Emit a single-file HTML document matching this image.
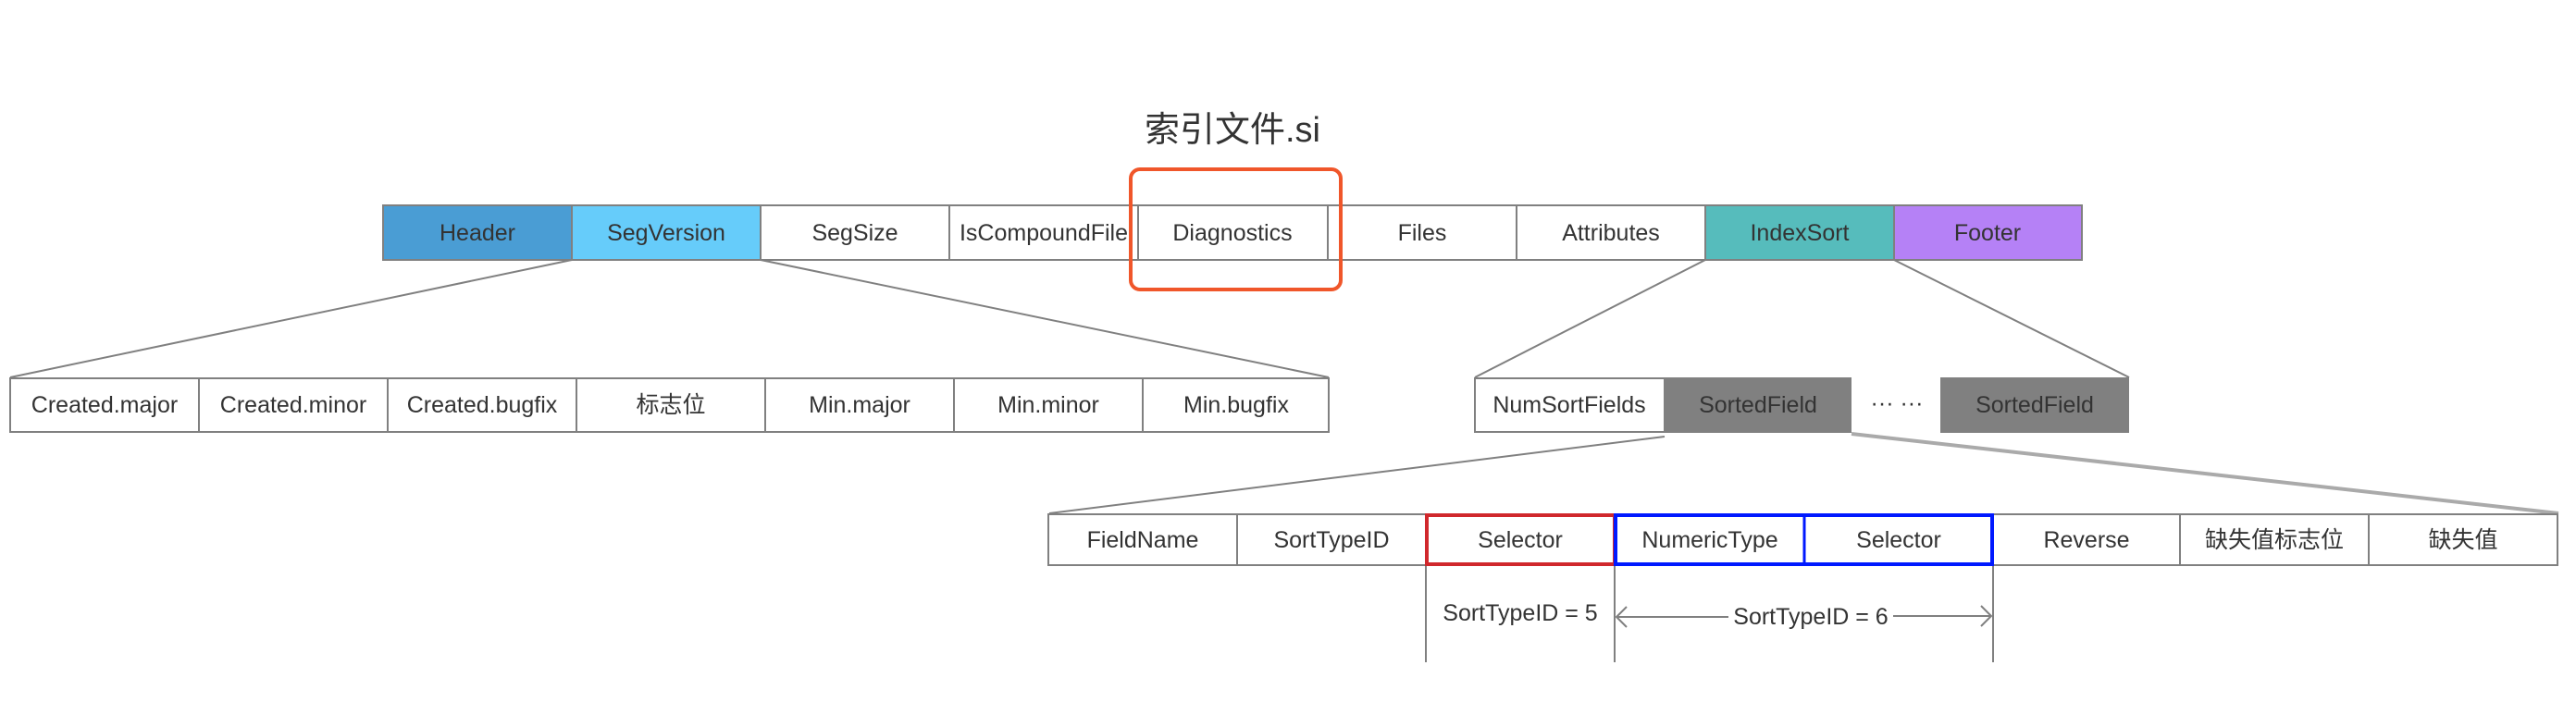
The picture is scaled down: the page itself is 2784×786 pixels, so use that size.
<!DOCTYPE html>
<html><head><meta charset="utf-8"><style>
html,body{margin:0;padding:0;background:#fff;}
svg{display:block}
text{font-family:"Liberation Sans","Noto Sans CJK SC",sans-serif;font-size:25px;fill:#333;text-anchor:middle;dominant-baseline:central}
</style></head><body>
<svg width="2784" height="786" viewBox="0 0 2784 786" xmlns="http://www.w3.org/2000/svg">
<text x="1332" y="141" style="font-size:38px">索引文件.si</text>
<!-- top row -->
<g stroke="#808080" stroke-width="2">
<rect x="414" y="222" width="204" height="59" fill="#4a9dd4"/>
<rect x="618" y="222" width="204" height="59" fill="#66ccfa"/>
<rect x="822" y="222" width="204" height="59" fill="#fff"/>
<rect x="1026" y="222" width="204" height="59" fill="#fff"/>
<rect x="1230" y="222" width="205" height="59" fill="#fff"/>
<rect x="1435" y="222" width="204" height="59" fill="#fff"/>
<rect x="1639" y="222" width="204" height="59" fill="#fff"/>
<rect x="1843" y="222" width="204" height="59" fill="#56bcbc"/>
<rect x="2047" y="222" width="203" height="59" fill="#b581f6"/>
</g>
<text x="516" y="252">Header</text>
<text x="720" y="252">SegVersion</text>
<text x="924" y="252">SegSize</text>
<text x="1128" y="252">IsCompoundFile</text>
<text x="1332" y="252">Diagnostics</text>
<text x="1537" y="252">Files</text>
<text x="1741" y="252">Attributes</text>
<text x="1945" y="252">IndexSort</text>
<text x="2148" y="252">Footer</text>
<rect x="1222" y="183" width="227" height="130" rx="10" fill="none" stroke="#f0562a" stroke-width="4"/>
<!-- connectors -->
<g stroke="#808080" stroke-width="2" fill="none">
<line x1="618" y1="281" x2="11" y2="408"/>
<line x1="822" y1="281" x2="1436" y2="408"/>
<line x1="1843" y1="281" x2="1594" y2="408"/>
<line x1="2047" y1="281" x2="2301" y2="408"/>
<line x1="1799" y1="472" x2="1134" y2="555"/>
</g>
<line x1="2001" y1="469" x2="2765" y2="555" stroke="#aaa" stroke-width="4"/>
<!-- second row left -->
<g stroke="#808080" stroke-width="2" fill="#fff">
<rect x="11" y="409" width="204" height="58"/>
<rect x="215" y="409" width="204" height="58"/>
<rect x="419" y="409" width="204" height="58"/>
<rect x="623" y="409" width="204" height="58"/>
<rect x="827" y="409" width="204" height="58"/>
<rect x="1031" y="409" width="204" height="58"/>
<rect x="1235" y="409" width="201" height="58"/>
<rect x="1594" y="409" width="205" height="58"/>
</g>
<rect x="1799" y="408" width="202" height="60" fill="#808080"/>
<rect x="2097" y="408" width="204" height="60" fill="#808080"/>
<text x="113" y="438">Created.major</text>
<text x="317" y="438">Created.minor</text>
<text x="521" y="438">Created.bugfix</text>
<text x="725" y="438">标志位</text>
<text x="929" y="438">Min.major</text>
<text x="1133" y="438">Min.minor</text>
<text x="1336" y="438">Min.bugfix</text>
<text x="1696" y="438">NumSortFields</text>
<text x="1900" y="438">SortedField</text>
<text x="2050" y="436">··· ···</text>
<text x="2199" y="438">SortedField</text>
<!-- third row -->
<g stroke="#808080" stroke-width="2" fill="#fff">
<rect x="1133" y="556" width="204" height="55"/>
<rect x="1337" y="556" width="204" height="55"/>
<rect x="2154" y="556" width="202" height="55"/>
<rect x="2356" y="556" width="204" height="55"/>
<rect x="2560" y="556" width="204" height="55"/>
<line x1="1541" y1="611" x2="1541" y2="716"/>
<line x1="1745" y1="611" x2="1745" y2="716"/>
<line x1="2154" y1="611" x2="2154" y2="716"/>
</g>
<rect x="1542" y="557" width="203" height="53" fill="none" stroke="#d0282c" stroke-width="4"/>
<rect x="1746" y="557" width="407" height="53" fill="none" stroke="#0019ff" stroke-width="4"/>
<line x1="1950" y1="557" x2="1950" y2="610" stroke="#0019ff" stroke-width="3"/>
<text x="1235" y="584">FieldName</text>
<text x="1439" y="584">SortTypeID</text>
<text x="1643" y="584">Selector</text>
<text x="1848" y="584">NumericType</text>
<text x="2052" y="584">Selector</text>
<text x="2255" y="584">Reverse</text>
<text x="2458" y="584">缺失值标志位</text>
<text x="2662" y="584">缺失值</text>
<text x="1643" y="663">SortTypeID = 5</text>
<g stroke="#808080" stroke-width="2" fill="none">
<line x1="1747" y1="667" x2="1868" y2="667"/>
<line x1="2046" y1="666" x2="2152" y2="666"/>
<polyline points="1758,656 1747,667 1758,678"/>
<polyline points="2141,655 2152,666 2141,677"/>
</g>
<text x="1957" y="667">SortTypeID = 6</text>
</svg>
</body></html>
